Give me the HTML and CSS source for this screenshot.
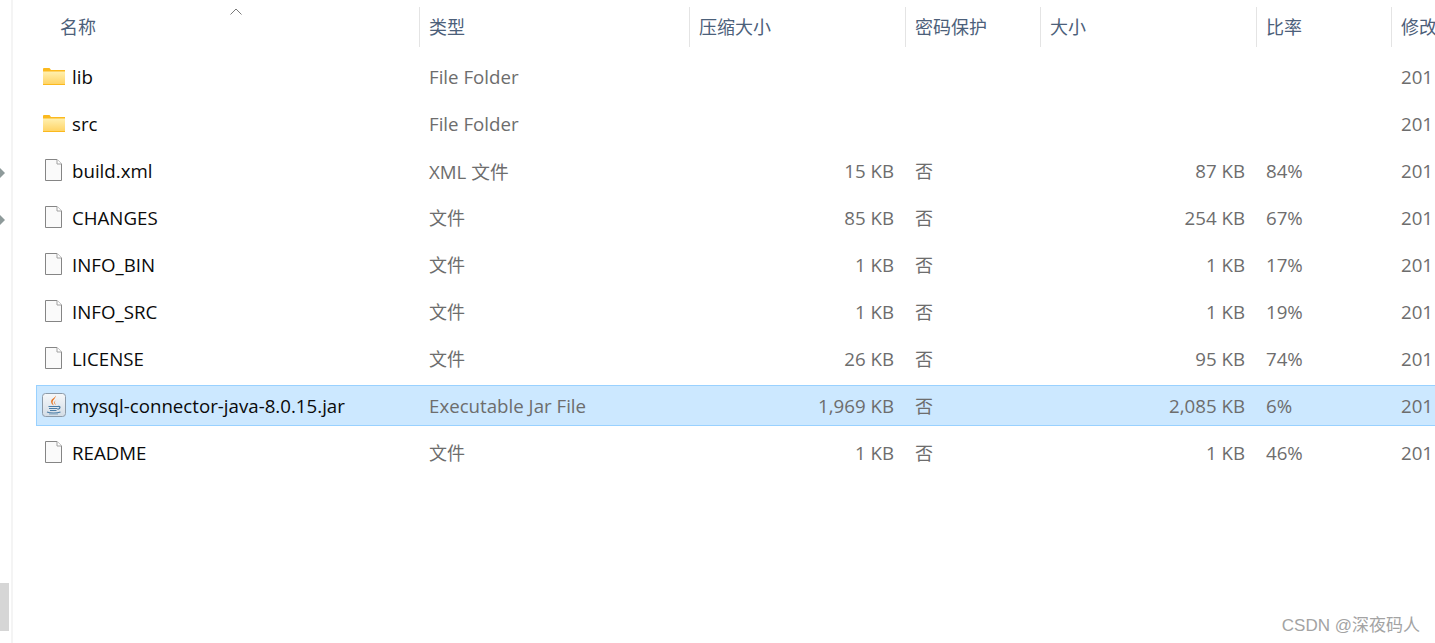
FILE: index.html
```html
<!DOCTYPE html>
<html lang="zh">
<head>
<meta charset="utf-8">
<title>mysql-connector-java-8.0.15</title>
<link rel="stylesheet" href="styles.css">
</head>
<body>
<svg width="0" height="0" class="defs">
  <defs>
    <linearGradient id="folderFill" x1="0" y1="0" x2="0" y2="1">
      <stop offset="0" stop-color="#fff0b0"/>
      <stop offset="1" stop-color="#ffd466"/>
    </linearGradient>
    <linearGradient id="jarFill" x1="0" y1="0" x2="0" y2="1">
      <stop offset="0" stop-color="#f6f8fa"/>
      <stop offset="1" stop-color="#d3dce5"/>
    </linearGradient>
    <symbol id="folder" viewBox="0 0 22 17">
      <path d="M0 1a1 1 0 0 1 1-1h5.500l1.500 2H22v15H0z" fill="#fbb91e"/>
      <path d="M0 3.500h22v12.500H0z" fill="url(#folderFill)"/>
    </symbol>
    <symbol id="file" viewBox="0 0 17 22">
      <path d="M.5.5h11.500l4.500 4.500v16.500H.5z" fill="#fafafa" stroke="#858585"/>
      <path d="M12 .5v4.500h4.500" fill="#fff" stroke="#a0a0a0"/>
    </symbol>
  </defs>
</svg>
<div class="sidebar-edge">
  <span class="tree-arrow tree-arrow-first"></span>
  <span class="tree-arrow tree-arrow-second"></span>
  <span class="scroll-thumb"></span>
</div>
<main class="list">
  <header class="row head">
    <div class="cell first">名称<span class="sort"><svg width="12" height="7" viewBox="0 0 12 7"><path d="M.5 6.500l5.500-5.500 5.500 5.500" fill="none" stroke="#7a7a7a"/></svg></span></div>
    <div class="cell">类型</div>
    <div class="cell">压缩大小</div>
    <div class="cell">密码保护</div>
    <div class="cell">大小</div>
    <div class="cell">比率</div>
    <div class="cell">修改</div>
  </header>

  <div class="row">
    <div class="cell name"><svg class="ico ico-folder"><use href="#folder"/></svg>lib</div>
    <div class="cell">File Folder</div><div class="cell num"></div><div class="cell"></div><div class="cell num"></div><div class="cell"></div><div class="cell">201</div>
  </div>
  <div class="row">
    <div class="cell name"><svg class="ico ico-folder"><use href="#folder"/></svg>src</div>
    <div class="cell">File Folder</div><div class="cell num"></div><div class="cell"></div><div class="cell num"></div><div class="cell"></div><div class="cell">201</div>
  </div>
  <div class="row">
    <div class="cell name"><svg class="ico ico-file"><use href="#file"/></svg>build.xml</div>
    <div class="cell mixed">XML 文件</div><div class="cell num">15 KB</div><div class="cell cjk">否</div><div class="cell num">87 KB</div><div class="cell">84%</div><div class="cell">201</div>
  </div>
  <div class="row">
    <div class="cell name"><svg class="ico ico-file"><use href="#file"/></svg>CHANGES</div>
    <div class="cell cjk">文件</div><div class="cell num">85 KB</div><div class="cell cjk">否</div><div class="cell num">254 KB</div><div class="cell">67%</div><div class="cell">201</div>
  </div>
  <div class="row">
    <div class="cell name"><svg class="ico ico-file"><use href="#file"/></svg>INFO_BIN</div>
    <div class="cell cjk">文件</div><div class="cell num">1 KB</div><div class="cell cjk">否</div><div class="cell num">1 KB</div><div class="cell">17%</div><div class="cell">201</div>
  </div>
  <div class="row">
    <div class="cell name"><svg class="ico ico-file"><use href="#file"/></svg>INFO_SRC</div>
    <div class="cell cjk">文件</div><div class="cell num">1 KB</div><div class="cell cjk">否</div><div class="cell num">1 KB</div><div class="cell">19%</div><div class="cell">201</div>
  </div>
  <div class="row">
    <div class="cell name"><svg class="ico ico-file"><use href="#file"/></svg>LICENSE</div>
    <div class="cell cjk">文件</div><div class="cell num">26 KB</div><div class="cell cjk">否</div><div class="cell num">95 KB</div><div class="cell">74%</div><div class="cell">201</div>
  </div>
  <div class="row selected">
    <div class="cell name"><svg class="ico ico-jar" viewBox="0 0 24 24">
      <rect x=".5" y=".5" width="23" height="23" rx="3" fill="url(#jarFill)" stroke="#8c9aa8"/>
      <path d="M13.500 2.500c1 3-4.500 4.500-2.500 8.500.4.800 1 1.500 1 1.500-2.500-1-3.500-3.500-2.500-5.500 1-1.700 3.800-2.300 4-4.500z" fill="#e8701a"/>
      <path d="M15.500 6.500c-2.500 1-3.500 2.500-1.500 5.500-2-1-3-3.500 1.500-5.500z" fill="#e8701a"/>
      <path d="M6.500 13.500h9.500M7 15.500h8.500M8 17.500h6.500" stroke="#4a7ca6" stroke-width="1.200"/>
      <path d="M16 13.500c2.500-.5 3 2-.5 3M5 19c3 1.300 10 1.300 13.500 0" fill="none" stroke="#4a7ca6" stroke-width="1.200"/>
      <path d="M7 21h9" stroke="#7fa3c0"/>
    </svg>mysql-connector-java-8.0.15.jar</div>
    <div class="cell">Executable Jar File</div><div class="cell num">1,969 KB</div><div class="cell cjk">否</div><div class="cell num">2,085 KB</div><div class="cell">6%</div><div class="cell">201</div>
  </div>
  <div class="row">
    <div class="cell name"><svg class="ico ico-file"><use href="#file"/></svg>README</div>
    <div class="cell cjk">文件</div><div class="cell num">1 KB</div><div class="cell cjk">否</div><div class="cell num">1 KB</div><div class="cell">46%</div><div class="cell">201</div>
  </div>
</main>
<div class="watermark">CSDN @深夜码人</div>
</body>
</html>
```
FILE: styles.css
```css
* { box-sizing: border-box; }
html, body {
  margin: 0;
  height: 100%;
  overflow: hidden;
  background: #fff;
}
body {
  font-family: "Open Sans", "Noto Sans CJK SC", sans-serif;
  font-size: 18.7px;
  color: #6d6d6d;
  display: flex;
  align-items: flex-start;
}
.defs { position: absolute; }

.sidebar-edge {
  position: relative;
  flex: 0 0 13px;
  height: 643px;
  margin-right: 23px;
  border-right: 2px solid #f4f4f4;
}
.tree-arrow {
  position: absolute;
  left: 0;
  width: 0;
  height: 0;
  border-left: 5px solid #8e9a9a;
  border-top: 5px solid transparent;
  border-bottom: 5px solid transparent;
}
.tree-arrow-first { top: 168px; }
.tree-arrow-second { top: 215px; }
.scroll-thumb {
  position: absolute;
  left: 0;
  top: 583px;
  width: 9px;
  height: 48px;
  background: #d6d6d6;
}

.list {
  flex: 1;
  min-width: 0;
  padding-top: 7px;
}
.row {
  display: grid;
  grid-template-columns: 383px 270px 216px 135px 216px 135px 44px;
  height: 47px;
  align-items: center;
  white-space: nowrap;
}
.row.head {
  height: 40px;
  margin-bottom: 6px;
  color: #4c607a;
  font-size: 18px;
}
.row.selected {
  height: 41px;
  margin: 3px -1px 3px 0;
  background: #cce8ff;
  box-shadow: inset 0 0 0 1px #99d1ff;
}
.cell {
  height: 100%;
  display: flex;
  align-items: center;
  padding-left: 10px;
  overflow: hidden;
  min-width: 0;
}
.cjk {
  font-size: 18px;
  padding-bottom: 2px;
}
.mixed { padding-bottom: 1px; }
.head .cell {
  border-left: 1px solid #e4e4e4;
  padding-left: 9px;
  padding-bottom: 2px;
}
.head .cell.first {
  border-left: 0;
  padding-left: 24px;
  overflow: visible;
  position: relative;
}
.sort { position: absolute; left: 194px; top: 1px; display: flex; }
.num {
  justify-content: flex-end;
  padding-right: 11px;
  padding-left: 0;
}
.name {
  color: #0a0a0a;
  padding-left: 36px;
  position: relative;
}
.ico { position: absolute; }
.ico-folder { left: 7px; top: 15px; width: 22px; height: 17px; }
.ico-file { left: 9px; top: 12px; width: 17px; height: 22px; }
.ico-jar { left: 6px; top: 8px; width: 24px; height: 24px; }
.watermark {
  position: absolute;
  right: 15px;
  bottom: 7px;
  font-family: "Liberation Sans", "Noto Sans CJK SC", sans-serif;
  font-size: 17px;
  color: #a3a3a3;
}
```
